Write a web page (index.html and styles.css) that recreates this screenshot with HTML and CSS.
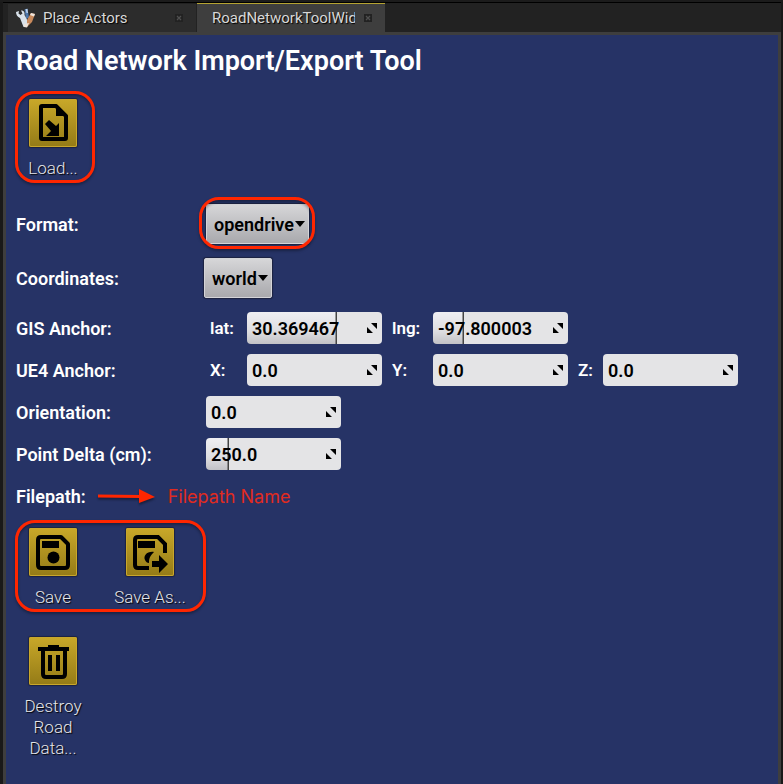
FILE: index.html
```html
<!DOCTYPE html>
<html lang="en">
<head>
<meta charset="utf-8">
<title>Road Network Import/Export Tool</title>
<link rel="stylesheet" href="styles.css">
</head>
<body>
<svg class="symbols" aria-hidden="true">
  <symbol id="resize" viewBox="0 0 12 12"><path d="M5 1h6v6zM1 5v6h6z"/></symbol>
  <symbol id="close" viewBox="0 0 10 10"><rect x="1" y="1" width="8" height="8" fill="#222"/><path d="M3 3l4 4M7 3l-4 4" stroke="#505050" stroke-width="1.3"/></symbol>
</svg>
<div class="window">
  <nav class="tabs">
    <button class="tab" type="button">
      <svg class="tab-icon" viewBox="0 0 20 20">
        <path d="M11 11L9.500 1.500l3-1 1.500 9z" fill="#4c76aa"/>
        <path d="M10.500 1l2 0 .5 4-1.500 0z" fill="#b9cfea"/>
        <path d="M1 4l3-1-.5 2.500 2 1.500 2-1.500L6 2.500c3 0 4 2 3.500 4.500l4 7.500-2 4-3 .5-3.500-9C2.500 9 1 7 1 4z" fill="#d9e2ea"/>
        <path d="M12 12l4-7 4 1-3 8-5 5z" fill="#c98a5c"/>
        <path d="M16 5l4 1-1 2.500-4-1.500zM9 16l5-1-2 4.500-3-.5z" fill="#eee4dc"/>
      </svg>
      <span class="tab-title">Place Actors</span>
      <svg class="close"><use href="#close"/></svg>
    </button>
    <button class="tab active" type="button">
      <span class="tab-title">RoadNetworkToolWidget</span>
      <svg class="close"><use href="#close"/></svg>
    </button>
  </nav>
  <main class="panel">
    <h1>Road Network Import/Export Tool</h1>
    <div class="tools marked">
      <button class="tool" type="button">
        <svg class="tool-icon" viewBox="0 0 48 48">
          <path d="M13 7h14l10 10v22q0 1-1 1H13q-1 0-1-1V8q0-1 1-1z" fill="none" stroke="#000" stroke-width="4" stroke-linejoin="round"/>
          <path d="M27 5l12 12H27z"/>
          <path d="M16 25l4-4 7 6 3-3v13H17l5-5z"/>
        </svg>
        <span>Load...</span>
      </button>
    </div>

    <form class="settings">
      <div class="row choice">
        <label class="name" for="format">Format:</label>
        <span class="select marked"><select id="format"><option>opendrive</option></select><svg class="caret" viewBox="0 0 10 6"><path d="M0 0h10L5 6z"/></svg></span>
      </div>
      <div class="row choice">
        <label class="name near" for="coords">Coordinates:</label>
        <span class="select"><select id="coords"><option>world</option></select><svg class="caret" viewBox="0 0 10 6"><path d="M0 0h10L5 6z"/></svg></span>
      </div>
      <div class="row">
        <span class="name">GIS Anchor:</span>
        <label class="axis" for="lat">lat:</label>
        <span class="number"><input class="lat" id="lat" value="30.369467"><svg><use href="#resize"/></svg></span>
        <label class="axis" for="lng">lng:</label>
        <span class="number"><input class="lng" id="lng" value="-97.800003"><svg><use href="#resize"/></svg></span>
      </div>
      <div class="row">
        <span class="name">UE4 Anchor:</span>
        <label class="axis" for="x">X:</label>
        <span class="number"><input id="x" value="0.0"><svg><use href="#resize"/></svg></span>
        <label class="axis" for="y">Y:</label>
        <span class="number"><input id="y" value="0.0"><svg><use href="#resize"/></svg></span>
        <label class="axis short" for="z">Z:</label>
        <span class="number"><input id="z" value="0.0"><svg><use href="#resize"/></svg></span>
      </div>
      <div class="row">
        <label class="name" for="orientation">Orientation:</label>
        <span class="number"><input id="orientation" value="0.0"><svg><use href="#resize"/></svg></span>
      </div>
      <div class="row">
        <label class="name" for="delta">Point Delta (cm):</label>
        <span class="number"><input class="delta" id="delta" value="250.0"><svg><use href="#resize"/></svg></span>
      </div>
      <div class="row">
        <span>Filepath:</span>
        <svg class="arrow" viewBox="0 0 58 16"><path d="M0 8l43 .5" stroke="#ff2600" stroke-width="3"/><path d="M41 1l16 8-16 6z" fill="#ff2600"/></svg>
        <span class="note">Filepath Name</span>
      </div>
    </form>

    <div class="tools marked save-tools">
      <button class="tool" type="button">
        <svg class="tool-icon" viewBox="0 0 48 48">
          <path d="M12 9h20l7 7v21q0 3-3 3H12q-3 0-3-3V12q0-3 3-3z" fill="none" stroke="#000" stroke-width="4" stroke-linejoin="round"/>
          <path d="M13 13h17v7H13z"/><circle cx="24.500" cy="29.500" r="6"/>
        </svg>
        <span>Save</span>
      </button>
      <button class="tool" type="button">
        <svg class="tool-icon" viewBox="0 0 48 48">
          <path d="M23 40H12q-3 0-3-3V12q0-3 3-3h20l7 7v9" fill="none" stroke="#000" stroke-width="4"/>
          <path d="M12 13h17v7H12zM28 24c-7-1-11 4-9 8 1 2 2 3 4 3 0-5 1-7 5-11zM26 33h7v-6l9 9-9 9v-6h-7z"/>
        </svg>
        <span>Save As...</span>
      </button>
    </div>
    <div class="tools">
      <button class="tool" type="button">
        <svg class="tool-icon" viewBox="0 0 48 48">
          <path d="M9 10h10V8h11v2h10v4H9z"/>
          <path d="M14 13v24q0 3 3 3h16q3 0 3-3V13" fill="none" stroke="#000" stroke-width="4"/>
          <path d="M19 18h4v16h-4zM27 18h4v16h-4z"/>
        </svg>
        <span>Destroy Road Data...</span>
      </button>
    </div>
  </main>
</div>
</body>
</html>
```
FILE: styles.css
```css
* { box-sizing: border-box; }

body {
  margin: 0;
  background: #191919;
  font-family: Roboto, "Liberation Sans", sans-serif;
}

button, input, select { font: inherit; }

.symbols { display: none; }

.window {
  display: flex;
  flex-direction: column;
  min-height: 100vh;
  padding: 0 2px 0 3px;
  border-top: 2px solid #1c1c1c;
}

.tabs {
  display: flex;
  gap: 1px;
  height: 30px;
  padding-left: 5px;
  border-top: 1px solid #000;
  background: #222;
}

.tab {
  display: flex;
  align-items: center;
  width: 188px;
  padding: 0 12px 0 7px;
  border: 0;
  border-top: 1px solid #222;
  background: #2c2c2c;
  color: #d8d8d8;
  font-size: 15px;
  text-align: left;
  text-shadow: 1px 1px 1px #000;
}

.tab.active {
  padding-left: 15px;
  border-top-color: #b5a332;
  background: #3e3e3e;
}

.tab-icon { width: 20px; height: 20px; margin-right: 8px; }

.tab-title {
  flex: 1;
  overflow: hidden;
  white-space: nowrap;
}

.close { width: 10px; height: 10px; margin-left: 8px; }

.panel {
  flex: 1;
  padding: 10px;
  border: 3px solid #3e3e3e;
  border-bottom: 0;
  background: #263366;
  color: #fff;
}

h1 {
  margin: 0 0 22px;
  font-size: 27px;
  font-weight: 600;
  line-height: 32px;
}

.marked { position: relative; }

.marked::after {
  content: "";
  position: absolute;
  inset: -8px -5px -4px -1px;
  border: 3px solid #ff2600;
  border-radius: 20px;
  box-shadow: 0 2px 3px #0005, inset 0 2px 3px #0005;
  pointer-events: none;
}

.tools {
  display: flex;
  gap: 23px;
  width: max-content;
}

.tool {
  display: flex;
  flex-direction: column;
  align-items: center;
  gap: 11px;
  width: 74px;
  padding: 0;
  border: 0;
  background: none;
  color: #e4e4e8;
  font-size: 17px;
  font-weight: 300;
  line-height: 21px;
  text-shadow: 1px 1px 1px #000;
}

.save-tools .tool span { white-space: nowrap; }

.tool-icon {
  width: 48px;
  height: 48px;
  border-radius: 2px;
  background: linear-gradient(#c9a829, #947b17);
  box-shadow: inset 0 0 0 1px #c9a72b, 0 0 1px 1px #1c2240;
}

.settings {
  display: flex;
  flex-direction: column;
  gap: 10px;
  margin: 25px 0 16px;
  font-size: 18px;
  font-weight: 600;
}

.row {
  display: flex;
  align-items: center;
  height: 32px;
}

.row.choice { height: 40px; margin-bottom: 4px; }

.name { width: 190px; }
.name.near { width: 188px; }

.axis { width: 41px; padding-left: 4px; font-size: 17px; }
.number + .axis { padding-left: 0; margin-left: 10px; }
.number + .axis.short { width: 25px; }

.select { position: relative; }
.select.marked::after { inset: -7px -6px -5px -7px; }

select {
  appearance: none;
  height: 40px;
  padding: 0 14px 0 7px;
  border: 1px solid #d4d4d8;
  border-radius: 2px;
  background: linear-gradient(#d6d6d8, #a9a9ad);
  box-shadow: 0 0 1px 1px #1c2240;
  color: #000;
}

.caret {
  position: absolute;
  top: 17px;
  right: 4px;
  width: 10px;
  height: 6px;
  pointer-events: none;
}

.number { position: relative; display: flex; }

.number input {
  width: 135px;
  height: 32px;
  padding: 0 28px 0 5px;
  border: 0;
  border-radius: 4px;
  background: #e4e4e6 no-repeat;
  color: #000;
}

.number .lat, .number .lng, .number .delta {
  background-image: linear-gradient(to left, #444 1px, #0000 2px, #0000), linear-gradient(#efeff2, #dedee1 60%, #c2c2c6);
}

.number .lat { background-size: 90px 100%; }
.number .lng { background-size: 31px 100%; }
.number .delta { background-size: 23px 100%; }

.number svg {
  position: absolute;
  top: 10px;
  right: 4px;
  width: 12px;
  height: 12px;
  pointer-events: none;
}

.arrow {
  width: 58px;
  height: 16px;
  margin: 0 12px;
  filter: drop-shadow(0 2px 1px #0006);
}

.note {
  color: #e02b20;
  font-family: Inter, "Open Sans", sans-serif;
  font-weight: 400;
}

.save-tools { margin-bottom: 29px; }
.save-tools::after { right: -19px; }
```
